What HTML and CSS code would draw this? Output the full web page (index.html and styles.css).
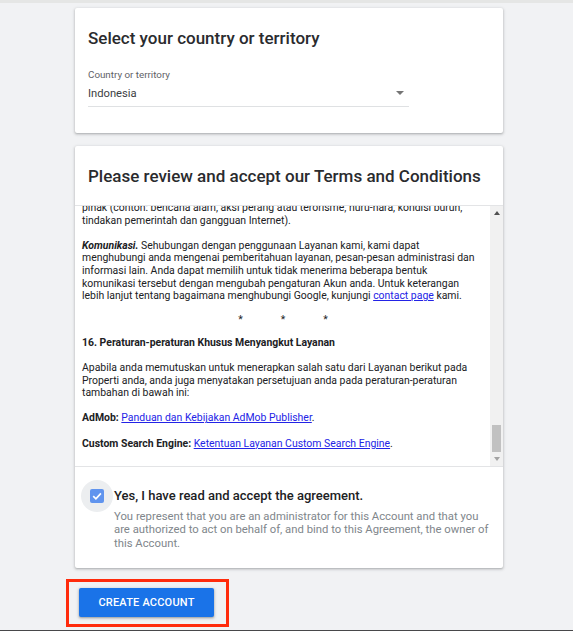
FILE: index.html
```html
<!DOCTYPE html>
<html lang="en">
<head>
<meta charset="utf-8">
<title>Create account</title>
<link rel="stylesheet" href="styles.css">
</head>
<body>
<div class="screen">
  <div class="topstrip"></div>
  <main class="page">
    <section class="card country-card">
      <h2 class="card-title">Select your country or territory</h2>
      <div class="field">
        <div class="field-label">Country or territory</div>
        <div class="field-select">
          <span class="field-value">Indonesia</span>
          <span class="select-arrow"></span>
        </div>
      </div>
    </section>

    <section class="card terms-card">
      <header class="terms-header">
        <h2 class="card-title">Please review and accept our Terms and Conditions</h2>
      </header>
      <div class="terms-box">
        <div class="terms-text">
          <div class="terms-inner">
            <p>pihak (contoh: bencana alam, aksi perang atau terorisme, huru-hara, kondisi buruh,<br>tindakan pemerintah dan gangguan Internet).</p>
            <p><b><i>Komunikasi.</i></b> Sehubungan dengan penggunaan Layanan kami, kami dapat<br>menghubungi anda mengenai pemberitahuan layanan, pesan-pesan administrasi dan<br>informasi lain. Anda dapat memilih untuk tidak menerima beberapa bentuk<br>komunikasi tersebut dengan mengubah pengaturan Akun anda. Untuk keterangan<br>lebih lanjut tentang bagaimana menghubungi Google, kunjungi <a href="#">contact page</a> kami.</p>
            <p class="stars"><span>*</span><span>*</span><span>*</span></p>
            <p><b>16. Peraturan-peraturan Khusus Menyangkut Layanan</b></p>
            <p>Apabila anda memutuskan untuk menerapkan salah satu dari Layanan berikut pada<br>Properti anda, anda juga menyatakan persetujuan anda pada peraturan-peraturan<br>tambahan di bawah ini:</p>
            <p><b>AdMob:</b> <a href="#">Panduan dan Kebijakan AdMob Publisher</a>.</p>
            <p><b>Custom Search Engine:</b> <a href="#">Ketentuan Layanan Custom Search Engine</a>.</p>
          </div>
        </div>
        <div class="scrollbar">
          <div class="sb-btn"><span class="sb-up"></span></div>
          <div class="sb-track"><div class="sb-thumb"></div></div>
          <div class="sb-btn"><span class="sb-down"></span></div>
        </div>
      </div>
      <div class="agree">
        <div class="check-halo">
          <span class="checkbox">
            <svg viewBox="0 0 14 14" width="14" height="14"><path d="M3.2 7.2 L5.9 9.8 L10.9 4.4" fill="none" stroke="#ffffff" stroke-width="1.7"/></svg>
          </span>
        </div>
        <div class="agree-text">
          <div class="agree-title">Yes, I have read and accept the agreement.</div>
          <div class="agree-desc">You represent that you are an administrator for this Account and that you<br>are authorized to act on behalf of, and bind to this Agreement, the owner of<br>this Account.</div>
        </div>
      </div>
    </section>

    <div class="highlight">
      <button class="primary-btn" type="button">CREATE ACCOUNT</button>
    </div>
  </main>
</div>
</body>
</html>
```
FILE: styles.css
```css
* { box-sizing: border-box; }
html, body {
  margin: 0;
  padding: 0;
  background: #f1f2f4;
  font-family: Roboto, "Noto Sans", "Liberation Sans", sans-serif;
  color: #202124;
}
.screen {
  height: 631px;
  overflow: hidden;
  border-bottom: 1px solid #47474a;
  display: flex;
  flex-direction: column;
}
.topstrip {
  height: 3px;
  background: #e5e6e5;
  flex: none;
}
.page {
  flex: 1;
  padding-left: 75px;
}
.card {
  width: 428px;
  background: #ffffff;
  border-radius: 2px;
  box-shadow: 0 1px 2px rgba(60,64,67,0.28), 0 1px 3px 1px rgba(60,64,67,0.12);
}
.card-title {
  margin: 0;
  font-size: 17px;
  line-height: 20px;
  font-weight: 500;
  color: #2a2b2e;
}
.country-card {
  margin-top: 5px;
  height: 125px;
  padding: 20px 0 0 13px;
}
.field {
  margin-top: 20px;
  width: 321px;
}
.field-label {
  font-size: 9.8px;
  line-height: 13px;
  color: #5f6368;
}
.field-select {
  display: flex;
  align-items: center;
  justify-content: space-between;
  height: 26px;
  padding-bottom: 1px;
  border-bottom: 1px solid #dfe1e3;
}
.field-value {
  font-size: 11.2px;
  color: #3c4043;
}
.select-arrow {
  width: 0;
  height: 0;
  margin-right: 5px;
  border-left: 4px solid transparent;
  border-right: 4px solid transparent;
  border-top: 4px solid #757575;
}
.terms-card {
  margin-top: 13px;
  height: 422px;
  display: flex;
  flex-direction: column;
}
.terms-header {
  padding: 20px 13px 0 13px;
  height: 60px;
  border-bottom: 1px solid #e3e4e6;
  flex: none;
}
.terms-box {
  height: 261px;
  display: flex;
  border-bottom: 1px solid #e3e4e6;
  flex: none;
}
.terms-text {
  flex: 1;
  overflow: hidden;
  padding-left: 7px;
}
.terms-inner {
  margin-top: -4px;
  font-size: 10.45px;
  line-height: 12.65px;
  color: #202124;
}
.terms-inner p {
  margin: 0 0 12.4px 0;
  white-space: nowrap;
}
.terms-inner b { font-weight: 700; }
.terms-inner a {
  color: #2323e6;
  text-decoration: underline;
}
.terms-inner .stars {
  display: flex;
  justify-content: center;
  gap: 38px;
  padding-right: 6px;
  line-height: 9.3px;
  height: 9.3px;
}
.scrollbar {
  width: 13px;
  flex: none;
  background: #f1f1f1;
  display: flex;
  flex-direction: column;
}
.sb-btn {
  height: 14px;
  display: flex;
  align-items: center;
  justify-content: center;
  flex: none;
}
.sb-up, .sb-down {
  width: 0;
  height: 0;
  border-left: 3.5px solid transparent;
  border-right: 3.5px solid transparent;
}
.sb-up { border-bottom: 4px solid #505050; }
.sb-down { border-top: 4px solid #a3a3a3; }
.sb-track {
  flex: 1;
  display: flex;
  flex-direction: column;
  justify-content: flex-end;
  align-items: center;
}
.sb-thumb {
  width: 9px;
  height: 27px;
  background: #c1c1c1;
}
.agree {
  display: flex;
  align-items: flex-start;
  padding: 13px 10px 0 6px;
}
.check-halo {
  width: 32px;
  height: 32px;
  border-radius: 50%;
  background: #eceef0;
  display: flex;
  align-items: center;
  justify-content: center;
  flex: none;
}
.checkbox {
  width: 14px;
  height: 14px;
  border-radius: 2px;
  background: #6094ee;
  display: flex;
}
.agree-text {
  margin-left: 1px;
  padding-top: 6px;
}
.agree-title {
  font-size: 13px;
  line-height: 20px;
  font-weight: 500;
  color: #202124;
}
.agree-desc {
  margin-top: 4px;
  font-size: 11.3px;
  line-height: 13.4px;
  color: #80868b;
  white-space: nowrap;
}
.highlight {
  display: inline-block;
  margin: 11px 0 0 -9px;
  border: 3px solid #ff2b0c;
  padding: 6px 12px 7px 10px;
}
.primary-btn {
  display: block;
  width: 135px;
  height: 29px;
  border: none;
  border-radius: 2px;
  background: #1a73e8;
  color: #ffffff;
  font-family: Roboto, "Noto Sans", "Liberation Sans", sans-serif;
  font-size: 11px;
  font-weight: 500;
  letter-spacing: 0.2px;
  box-shadow: 0 1px 2px rgba(60,64,67,0.35), 0 1px 3px 1px rgba(60,64,67,0.15);
  padding: 0;
}
```
